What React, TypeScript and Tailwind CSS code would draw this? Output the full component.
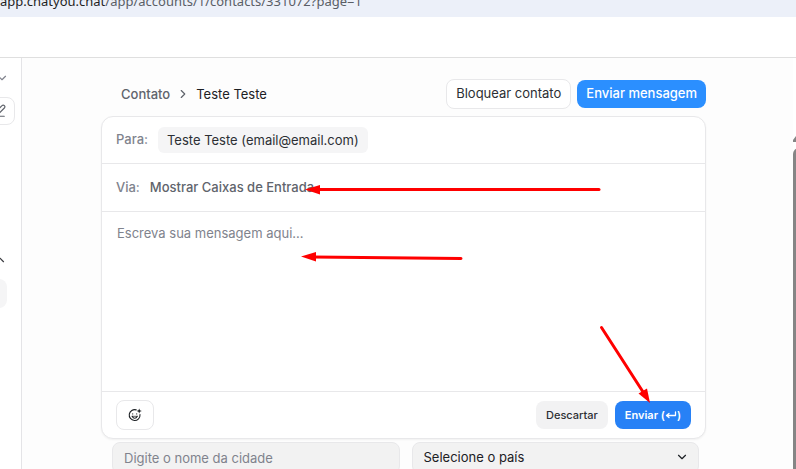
import { ChevronDown, ChevronRight, ChevronUp, PenLine } from "lucide-react";

const AddressBar = () => (
  <div className="flex h-[17px] shrink-0 items-end overflow-hidden bg-[#ecf0f9]">
    <p className="whitespace-nowrap pb-1.5 font-['Noto_Sans',sans-serif] text-[13px] leading-5 text-[#1f1f1f]">
      app.chatyou.chat
      <span className="text-[#5a5e66]">
        /app/accounts/1/contacts/331072?page=1
      </span>
    </p>
  </div>
);

const Sidebar = () => (
  <aside className="flex w-[22px] shrink-0 flex-col items-end overflow-hidden border-r border-[#e4e4e7] bg-white">
    <button type="button" aria-label="Trocar conta" className="mt-3 mr-3">
      <ChevronDown className="h-4 w-3.5 text-[#80838d]" strokeWidth={2} />
    </button>
    <button
      type="button"
      aria-label="Nova conversa"
      className="mt-[11px] mr-1.5 flex h-7 w-10 shrink-0 items-center justify-end rounded-lg border border-[#e8e8ea] pr-2"
    >
      <PenLine className="size-3.5 text-[#60646c]" strokeWidth={2} />
    </button>
    <button type="button" aria-label="Recolher" className="mt-32 mr-3.5">
      <ChevronUp className="size-3.5 text-[#3a3b40]" strokeWidth={2} />
    </button>
    <div className="mt-3 mr-3.5 h-[29px] w-10 shrink-0 rounded-lg bg-[#f5f5f6]" />
  </aside>
);

const SmileIcon = () => (
  <svg
    viewBox="0 0 14 14"
    className="size-3.5"
    fill="none"
    stroke="currentColor"
    strokeWidth="1.1"
    strokeLinecap="round"
  >
    <path d="M8.2 1.9A5.4 5.4 0 1 0 12 6.6" />
    <path d="M4.700 5.700v.2M8.700 5.700v.2" />
    <path d="M4.200 8.300c.6 1.400 1.500 2 2.500 2s1.900-.6 2.500-2" />
    <path d="M4.200 8.300h5" strokeWidth="0.700" />
    <path
      d="M11.200.4l.7 1.900 1.900.7-1.900.7-.7 1.900-.7-1.900L8.600 3l1.900-.7z"
      fill="currentColor"
      stroke="none"
    />
  </svg>
);

const ReturnIcon = () => (
  <svg
    viewBox="0 0 12 10"
    className="h-2.5 w-3"
    fill="none"
    stroke="currentColor"
    strokeWidth="1.3"
    strokeLinecap="round"
    strokeLinejoin="round"
  >
    <path d="M10.500 2v3.500h-9M4 3.500L1.500 5.500 4 7.500" />
  </svg>
);

const PageHeader = () => (
  <header className="flex items-center justify-between pl-5">
    <nav className="flex items-center gap-1.5 text-[13px] leading-5">
      <a href="#contatos" className="font-medium text-[#60646c]">
        Contato
      </a>
      <ChevronRight className="size-3.5 text-[#60646c]" strokeWidth={2} />
      <span className="text-[#1c2024]">Teste Teste</span>
    </nav>
    <div className="flex items-center gap-1.5 text-[13px]">
      <button
        type="button"
        className="h-[30px] rounded-lg border border-[#e8e8ea] bg-white px-[9px] text-[#2c2f34]"
      >
        Bloquear contato
      </button>
      <button
        type="button"
        className="h-7 rounded-lg bg-[#2b8fff] px-[9px] font-medium text-white"
      >
        Enviar mensagem
      </button>
    </div>
  </header>
);

const Composer = () => (
  <form
    className="mt-[7px] rounded-xl border border-[#e8e8ea] bg-white shadow-xs"
    onSubmit={(e) => e.preventDefault()}
  >
    <div className="flex h-[47px] items-center gap-2.5 border-b border-[#e8e8ea] px-3.5 text-[13px]">
      <span className="font-medium text-[#80838d]">Para:</span>
      <span className="rounded-md bg-[#f5f5f6] px-[9px] py-[3px] leading-5 text-[#2c2f34]">
        Teste Teste (email@email.com)
      </span>
    </div>
    <div className="flex h-12 items-center gap-2.5 border-b border-[#e8e8ea] px-3.5 text-[13px] font-medium">
      <span className="text-[#80838d]">Via:</span>
      <button type="button" className="text-[#60646c]">
        Mostrar Caixas de Entrada
      </button>
    </div>
    <textarea
      aria-label="Mensagem"
      placeholder="Escreva sua mensagem aqui..."
      className="block h-[179px] w-full resize-none px-[15px] py-[11px] text-[13px] leading-5 outline-none placeholder:text-[#80838d]"
    />
    <div className="flex h-[47px] items-center justify-between border-t border-[#e8e8ea] px-3.5">
      <button
        type="button"
        aria-label="Inserir emoji"
        className="flex h-[30px] w-[38px] items-center justify-center rounded-lg border border-[#e8e8ea] text-[#1c2024]"
      >
        <SmileIcon />
      </button>
      <div className="flex items-center gap-[7px] text-[11px] font-medium">
        <button
          type="button"
          className="h-7 rounded-lg bg-[#f2f2f3] px-2.5 text-[#2c2f34]"
        >
          Descartar
        </button>
        <button
          type="submit"
          className="flex h-7 items-center rounded-lg bg-[#2781f6] px-2.5 font-semibold text-white"
        >
          Enviar (<ReturnIcon />)
        </button>
      </div>
    </div>
  </form>
);

const AddressFields = () => (
  <div className="mt-[3px] grid grid-cols-2 gap-3 pr-[7px] pl-[11px] text-[13px]">
    <input
      type="text"
      aria-label="Cidade"
      placeholder="Digite o nome da cidade"
      className="h-8 w-full min-w-0 rounded-lg border border-[#e8e8ea] bg-[#f2f2f2] px-[11px] outline-none placeholder:text-[#80838d]"
    />
    <div className="relative">
      <select
        aria-label="País"
        className="h-8 w-full appearance-none rounded-lg border border-[#e8e8ea] bg-[#f2f2f2] px-[11px] text-[#1c2024]"
      >
        <option>Selecione o país</option>
      </select>
      <ChevronDown
        className="pointer-events-none absolute top-2 right-2.5 size-3.5 text-[#1c2024]"
        strokeWidth={2}
      />
    </div>
  </div>
);

const Scrollbar = () => (
  <div className="flex w-[3px] shrink-0 flex-col overflow-hidden pt-[78px]">
    <svg viewBox="0 0 3 6" className="h-1.5 w-[3px] shrink-0 fill-[#858585]">
      <path d="M0 4L3 0v6H0z" />
    </svg>
    <div className="mt-1.5 w-3 flex-1 rounded-t-md bg-[#858585]" />
  </div>
);

// red pointers drawn over the page
const Arrows = () => (
  <svg
    className="pointer-events-none absolute top-0 left-0 h-[469px] w-[796px]"
    viewBox="0 0 796 469"
    fill="#ff0000"
    stroke="#ff0000"
    strokeLinecap="round"
  >
    <g strokeWidth="3">
      <path d="M316 189.500H599" />
      <path d="M313 257L461 258.500" />
      <path d="M601.500 327.500L645 395" />
    </g>
    <g stroke="none">
      <path d="M305 189.500L320 185v9.500z" />
      <path d="M301 256.500L316 252v9.500z" />
      <path d="M650 403L638.500 393.500L647 388.500z" />
    </g>
  </svg>
);

export default function App() {
  return (
    <div className="relative flex h-screen flex-col overflow-hidden bg-white font-['Inter',sans-serif]">
      <AddressBar />
      <div className="h-[41px] shrink-0 border-b border-[#dfdfdf] bg-white" />
      <div className="flex min-h-0 flex-1">
        <Sidebar />
        <main className="min-w-0 flex-1 bg-[#fdfdfd] pt-[21px] pr-[87px] pl-[79px]">
          <PageHeader />
          <Composer />
          <AddressFields />
        </main>
        <Scrollbar />
      </div>
      <Arrows />
    </div>
  );
}
